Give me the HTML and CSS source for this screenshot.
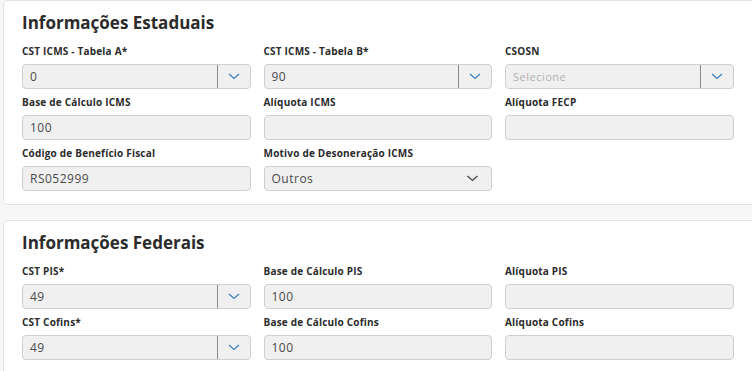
FILE: index.html
```html
<!DOCTYPE html>
<html lang="pt-BR">
<head>
	<meta charset="UTF-8" />
	<meta name="viewport" content="width=device-width, initial-scale=1.0" />
	<title>Informações Fiscais</title>
	<link rel="stylesheet" href="styles.css">
</head>
<body>
	<!-- Estaduais -->
	<section class="card">
		<h2 class="card-title">Informações Estaduais</h2>
		<div class="fields">
			<div class="field">
				<label>CST ICMS - Tabela A*</label>
				<div class="select split">
					<span class="value">0</span>
					<span class="arrow"><svg viewBox="0 0 12 7"><path d="M1 1l5 4.5L11 1"/></svg></span>
				</div>
			</div>
			<div class="field">
				<label>CST ICMS - Tabela B*</label>
				<div class="select split">
					<span class="value">90</span>
					<span class="arrow"><svg viewBox="0 0 12 7"><path d="M1 1l5 4.5L11 1"/></svg></span>
				</div>
			</div>
			<div class="field">
				<label>CSOSN</label>
				<div class="select split">
					<span class="value placeholder">Selecione</span>
					<span class="arrow"><svg viewBox="0 0 12 7"><path d="M1 1l5 4.5L11 1"/></svg></span>
				</div>
			</div>

			<div class="field">
				<label>Base de Cálculo ICMS</label>
				<div class="input">100</div>
			</div>
			<div class="field">
				<label>Alíquota ICMS</label>
				<div class="input"></div>
			</div>
			<div class="field">
				<label>Alíquota FECP</label>
				<div class="input"></div>
			</div>

			<div class="field">
				<label>Código de Benefício Fiscal</label>
				<div class="input">RS052999</div>
			</div>
			<div class="field">
				<label>Motivo de Desoneração ICMS</label>
				<div class="select plain">
					<span class="value">Outros</span>
					<span class="arrow"><svg viewBox="0 0 12 7"><path d="M1 1l5 4.5L11 1"/></svg></span>
				</div>
			</div>
		</div>
	</section>

	<!-- Federais -->
	<section class="card">
		<h2 class="card-title">Informações Federais</h2>
		<div class="fields">
			<div class="field">
				<label>CST PIS*</label>
				<div class="select split">
					<span class="value">49</span>
					<span class="arrow"><svg viewBox="0 0 12 7"><path d="M1 1l5 4.5L11 1"/></svg></span>
				</div>
			</div>
			<div class="field">
				<label>Base de Cálculo PIS</label>
				<div class="input">100</div>
			</div>
			<div class="field">
				<label>Alíquota PIS</label>
				<div class="input"></div>
			</div>

			<div class="field">
				<label>CST Cofins*</label>
				<div class="select split">
					<span class="value">49</span>
					<span class="arrow"><svg viewBox="0 0 12 7"><path d="M1 1l5 4.5L11 1"/></svg></span>
				</div>
			</div>
			<div class="field">
				<label>Base de Cálculo Cofins</label>
				<div class="input">100</div>
			</div>
			<div class="field">
				<label>Alíquota Cofins</label>
				<div class="input"></div>
			</div>
		</div>
	</section>
</body>
</html>
```

FILE: styles.css
```css
/* Variables */
:root {
	--page: #f7f7f7;
	--card-border: #e4e4e4;
	--field-bg: #f0f0f0;
	--field-border: #cfcfcf;
	--text: #333;
	--value: #4a4a4a;
	--muted: #b0b0b0;
	--arrow: #3a7fc0;
}
/* End of Variables */

* {
	margin: 0;
	padding: 0;
	box-sizing: border-box;
	font-family: "Open Sans", Lato, sans-serif;
}

body {
	background: var(--page);
	color: var(--text);
	overflow: hidden;
}

.card {
	width: 780px;
	margin-left: 3px;
	margin-bottom: 15px;
	padding: 11px 18px 13px 18px;
	background: #fff;
	border: 1px solid var(--card-border);
	border-radius: 4px;
}

.card-title {
	font-size: 17px;
	line-height: 22px;
	font-weight: 700;
	color: #2b2b2b;
	margin-bottom: 11px;
}

.fields {
	display: grid;
	grid-template-columns: repeat(3, 228.5px);
	column-gap: 13px;
	row-gap: 7px;
}

.field label {
	display: block;
	font-size: 10px;
	line-height: 12px;
	font-weight: 700;
	letter-spacing: 0.2px;
	color: #2b2b2b;
	margin-bottom: 7px;
}

.input,
.select {
	height: 25px;
	background: var(--field-bg);
	border: 1px solid var(--field-border);
	border-radius: 4px;
	font-size: 12px;
	letter-spacing: 0.5px;
	color: var(--value);
}

.input {
	padding-left: 7px;
	line-height: 23px;
}

.select {
	display: flex;
	align-items: stretch;
}

.select .value {
	flex: 1 1 0%;
	padding-left: 7px;
	line-height: 23px;
}

.select .placeholder {
	color: var(--muted);
	font-size: 11px;
}

.select .arrow {
	display: flex;
	align-items: center;
	justify-content: center;
	width: 33px;
}

.select.split .arrow {
	border-left: 1px solid #8a8a8a;
}

.select.plain .arrow {
	width: 38px;
}

.arrow svg {
	width: 12px;
	height: 7px;
	fill: none;
	stroke: var(--arrow);
	stroke-width: 1.2;
}

.select.plain .arrow svg {
	stroke: #444;
	width: 13px;
}
```
